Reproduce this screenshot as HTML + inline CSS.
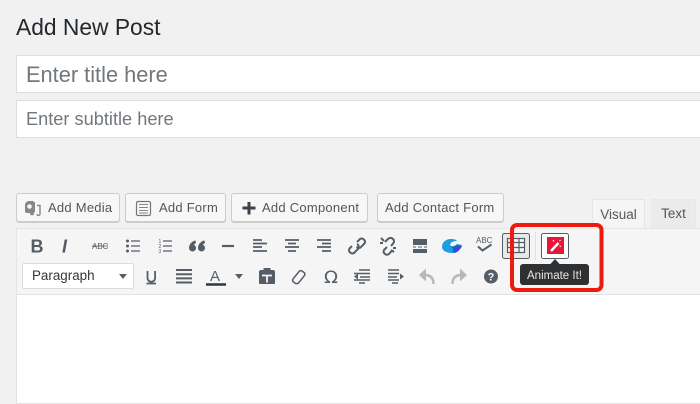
<!DOCTYPE html>
<html><head><meta charset="utf-8"><style>
html,body{margin:0;padding:0}
body{width:700px;height:400px;overflow:hidden;background:#f1f1f1;position:relative;font-family:"Liberation Sans",sans-serif}
.a{position:absolute;box-sizing:border-box;white-space:nowrap}
.in{left:16px;width:700px;background:#fff;border:1px solid #ddd;color:#72777c}
.btn{top:193px;height:29px;background:#f7f7f7;border:1px solid #ccc;border-radius:3px;box-shadow:0 1px 0 #ccc;color:#555;font-size:13px;line-height:27px;letter-spacing:.25px}
svg{position:absolute;left:0;top:0}
</style></head><body>
<div class="a" style="left:16px;top:13px;font-size:22.800px;line-height:28px;color:#23282d">Add New Post</div>
<div class="a in" style="top:55px;height:38px;font-size:21.800px;line-height:38px;padding-left:9px">Enter title here</div>
<div class="a in" style="top:100px;height:38px;font-size:18.200px;line-height:37px;padding-left:9px">Enter subtitle here</div>
<div class="a btn" style="left:16px;width:104px;padding-left:31px">Add Media</div>
<div class="a btn" style="left:125px;width:101px;padding-left:33px">Add Form</div>
<div class="a btn" style="left:231px;width:137px;padding-left:30px">Add Component</div>
<div class="a btn" style="left:377px;width:127px;padding-left:7px">Add Contact Form</div>
<div class="a" style="left:592px;top:199px;width:53px;height:30px;background:#f5f5f5;border:1px solid #e5e5e5;border-bottom:0;font-size:13.500px;line-height:29px;text-align:center;color:#555">Visual</div>
<div class="a" style="left:651px;top:199px;width:45px;height:29px;background:#ebebeb;border:1px solid #e8e8e8;border-bottom:0;font-size:13.500px;line-height:28px;text-align:center;color:#555">Text</div>
<div class="a" style="left:16px;top:228px;width:700px;height:67px;background:#f5f5f5;border:1px solid #e5e5e5;border-right:0"></div>
<div class="a" style="left:16px;top:294px;width:700px;height:110px;background:#fff;border:1px solid #e2e2e2"></div>
<div class="a" style="left:22px;top:263px;width:112px;height:26px;background:#fff;border:1px solid #ddd;border-radius:2px;font-size:13.400px;line-height:24px;padding-left:9px;color:#32373c">Paragraph</div>
<svg width="700" height="400" viewBox="0 0 700 400" fill="none">
<!-- button icons -->
<path d="M26 202.500l2-1.500h5l2 1.500v8.500a2 2 0 0 1-2 2h-6a2 2 0 0 1-2-2v-7z" fill="#82878c"/><circle cx="29.500" cy="206.500" r="2.300" fill="#f7f7f7"/><circle cx="32" cy="213.500" r="1.900" fill="#82878c"/><path d="M37 205.500h3v8.500a1.500 1.500 0 0 1-3 0" stroke="#82878c" stroke-width="1.400"/>
<rect x="136.500" y="201.500" width="14" height="14" rx="1.500" stroke="#72777c" stroke-width="1.200"/><path d="M139 204.500h9M139 207.500h9M139 210.500h9M139 213h9" stroke="#82878c"/>
<path d="M249 202v12.500M242.500 208h13" stroke="#3c434a" stroke-width="3"/>
<!-- row 1 -->
<text x="30.500" y="252.500" font-size="18" font-weight="bold" fill="#555d66">B</text>
<text x="62" y="252.500" font-size="18" font-weight="bold" font-style="italic" fill="#555d66">I</text>
<text x="92" y="249" font-size="8" fill="#555d66">ABC</text><path d="M92 246h16" stroke="#555d66" stroke-width=".8"/>
<circle cx="127.500" cy="241" r="1.500" fill="#555d66"/><circle cx="127.500" cy="246" r="1.500" fill="#555d66"/><circle cx="127.500" cy="251" r="1.500" fill="#555d66"/><path d="M131 241h9M131 246h9M131 251h9" stroke="#555d66" stroke-width="1.300"/>
<path d="M163 241h9M163 246h9M163 251h9" stroke="#555d66" stroke-width="1.300"/><text x="158.500" y="243" font-size="5" fill="#555d66">1</text><text x="158.500" y="248" font-size="5" fill="#555d66">2</text><text x="158.500" y="253" font-size="5" fill="#555d66">3</text>
<path d="M195 241c-3 1-5.500 3.500-5.500 7a3 3 0 1 0 3.500-3l2.500-2.500zM204 241c-3 1-5.500 3.500-5.500 7a3 3 0 1 0 3.500-3l2.500-2.500z" fill="#555d66" stroke="#555d66"/>
<path d="M222 246h12" stroke="#555d66" stroke-width="2.200"/>
<path d="M253 240h9M253 243.500h14M253 247h9M253 251h14" stroke="#555d66" stroke-width="1.800"/>
<path d="M285 240h14M288 243.500h8M285 247h14M288 251h8" stroke="#555d66" stroke-width="1.800"/>
<path d="M317 240h14M322 243.500h9M317 247h14M322 251h9" stroke="#555d66" stroke-width="1.800"/>
<path d="M353 247l-2.500 2.500a3.300 3.300 0 0 0 4.500 4.500l4-4a3.300 3.300 0 0 0-1-5M358 243l3-3a3.300 3.300 0 0 1 4.500 4.500l-4 4a3.300 3.300 0 0 1-4-.5" transform="translate(-1 -1)" stroke="#555d66" stroke-width="2"/>
<path d="M385 243l3-3a3.300 3.300 0 0 1 5 0 3.300 3.300 0 0 1 .5 4l-2.500 3M387 248l-3 3a3.300 3.300 0 0 0 5 4l2.500-3M381 239l3 3M380 244h3M391 251l3 2M393 249h3" transform="translate(0 -1)" stroke="#555d66" stroke-width="2"/>
<path d="M413 239h14v6h-14zM413 249h14v4h-14z" fill="#555d66"/><path d="M413 247h3M418 247h4M424 247h3" stroke="#555d66"/>
<path d="M442 247c0-5 4-8 9-8 3 0 5 .5 6 2-4 0-6 1-7 4 2 2 5 1 7-1l5 1c-2 5-5 8-10 8-5 0-10-2-10-6z" fill="#1e9ee0"/><path d="M450 246c2 2 5 1 7-1l5 1c-2 4-5 7-9 7 1-3 0-5-3-7z" fill="#2c4fd8"/>
<text x="476" y="243" font-size="8" fill="#555d66">ABC</text><path d="M478 246.500l4.500 4 9-6" stroke="#555d66" stroke-width="2"/>
<!-- table button -->
<rect x="502.500" y="233.500" width="27" height="25" rx="2" fill="#e8e8e8" stroke="#555d66"/>
<rect x="507.500" y="238.500" width="17" height="14" fill="#f5f5f5" stroke="#555d66" stroke-width="1.200"/><path d="M507 242.500h18M507 247.500h18M513 239v14M519 239v14" stroke="#555d66" stroke-width="1.200"/>
<path d="M535.500 232v28" stroke="#e0e0e0"/>
<rect x="541.500" y="233.500" width="27" height="25" rx="2" fill="#fff" stroke="#555d66"/>
<rect x="547" y="237" width="17" height="17" fill="#e8173a"/><path d="M551 251l7.500-8" stroke="#fff" stroke-width="2.400"/><path d="M560.500 240l-1 1M553 240l1 1.500M561 246.500l-1.500-.5" stroke="#fff"/>
<!-- row 2 -->
<path d="M119 274h8l-4 5z" fill="#555d66"/>
<path d="M147.500 271v7a3.800 3.800 0 0 0 7.600 0v-7M146.500 283.500h9.500" stroke="#555d66" stroke-width="1.800"/>
<path d="M176 270h16M176 274.200h16M176 278.400h16M176 282.500h16" stroke="#555d66" stroke-width="2"/>
<text x="210" y="281" font-size="15" fill="#555d66">A</text><path d="M206 284.500h20" stroke="#32373c" stroke-width="2.500"/>
<path d="M235 274h8l-4 5z" fill="#555d66"/>
<path d="M259 272q0-2 2-2h2.500v-2h7v2h2.500q2 0 2 2v11q0 1-1 1h-14q-1 0-1-1z" fill="#555d66"/><path d="M262 275.500h10M267 275.500v7" stroke="#f5f5f5" stroke-width="1.800"/>
<path d="M293 279l6-7.500q1.500-1.500 3-.5l2 1.500q1.500 1 .5 3l-6 7.500q-1.500 1-3 .5l-2-1.500q-1.500-1-.5-3z" stroke="#555d66" stroke-width="1.500"/><path d="M298 273l6 4.500-2 2.500-6-4.500z" fill="#555d66" opacity="0"/>
<text x="324" y="283" font-size="17" fill="#555d66" font-family="DejaVu Sans, sans-serif" textLength="14" lengthAdjust="spacingAndGlyphs">Ω</text>
<path d="M359 270h11M354 273.500h16M360 277h10M354 280h16M359 283h6" stroke="#555d66" stroke-width="1.500"/><path d="M358 273.500l-4 3 4 3z" fill="#555d66"/>
<path d="M388 270h11M388 273.500h11M388 277h9M388 280h11M392 283h6" stroke="#555d66" stroke-width="1.500"/><path d="M400 273.500l4 3-4 3z" fill="#555d66"/>
<path d="M433.500 284c0-6-3-9-9-9" stroke="#b4b9be" stroke-width="2.400"/><path d="M419 275l7-6.500v13z" fill="#b4b9be"/>
<path d="M452.500 284c0-6 3-9 9-9" stroke="#b4b9be" stroke-width="2.400"/><path d="M467 275l-7-6.500v13z" fill="#b4b9be"/>
<circle cx="491" cy="276.500" r="7" fill="#555d66"/><text x="491" y="280.500" font-size="11" font-weight="bold" fill="#fff" text-anchor="middle">?</text>
<!-- tooltip -->
<path d="M555 259l-5 5.500h10z" fill="#2f3032"/>
<rect x="520" y="264" width="69" height="21" rx="3" fill="#2f3032"/>
<text x="554.500" y="279" font-size="11.500" fill="#e8e8e8" text-anchor="middle">Animate It!</text>
<!-- highlight -->
<rect x="512" y="225" width="89.500" height="65" rx="5" stroke="#ec1a0f" stroke-width="4"/>
</svg>
</body></html>
